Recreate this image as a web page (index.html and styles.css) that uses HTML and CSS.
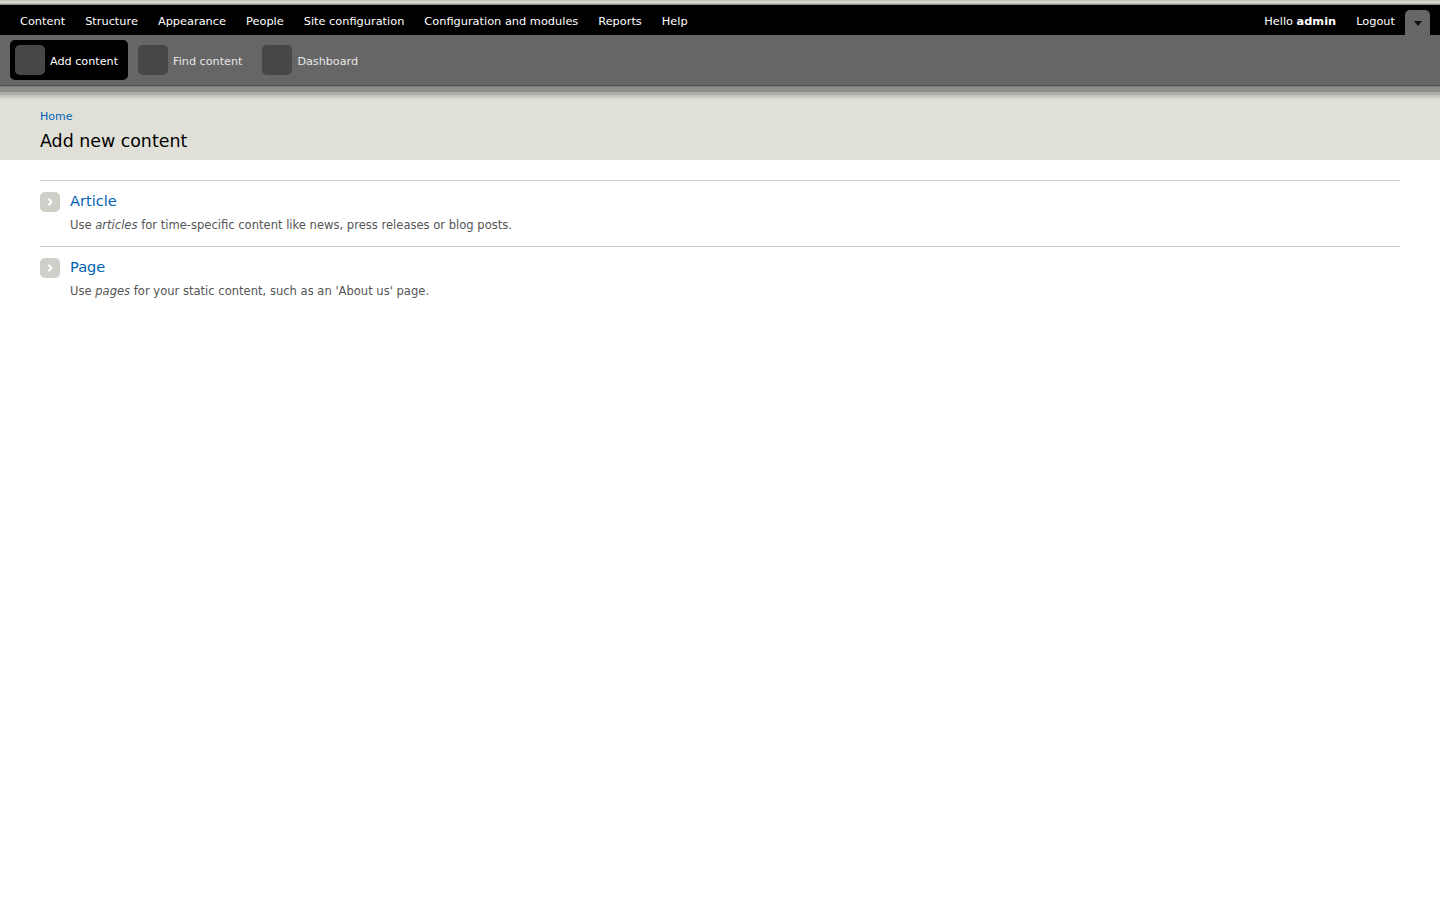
FILE: index.html
```html
<!DOCTYPE html>
<html lang="en">
<head>
<meta charset="utf-8">
<title>Add new content</title>
<link rel="stylesheet" href="styles.css">
</head>
<body>
<div class="toolbar">
  <div class="top-strip"></div>
  <nav class="menu-bar">
    <ul class="menu">
      <li><a href="#">Content</a></li>
      <li><a href="#">Structure</a></li>
      <li><a href="#">Appearance</a></li>
      <li><a href="#">People</a></li>
      <li><a href="#">Site configuration</a></li>
      <li><a href="#">Configuration and modules</a></li>
      <li><a href="#">Reports</a></li>
      <li><a href="#">Help</a></li>
    </ul>
    <div class="user">
      <span>Hello <strong>admin</strong></span>
      <a href="#">Logout</a>
      <span class="toggle"><svg width="8" height="5" viewBox="0 0 8 5"><path d="M0 0h8L4 5z" fill="#111"/></svg></span>
    </div>
  </nav>
  <div class="shortcuts">
    <a class="shortcut active" href="#"><span class="sicon"></span><span class="slabel">Add content</span></a>
    <a class="shortcut" href="#"><span class="sicon"></span><span class="slabel">Find content</span></a>
    <a class="shortcut" href="#"><span class="sicon"></span><span class="slabel">Dashboard</span></a>
  </div>
  <div class="shadow"></div>
</div>
<header class="page-head">
  <a class="crumb" href="#">Home</a>
  <h1>Add new content</h1>
</header>
<main class="content">
  <div class="item">
    <div class="item-title">
      <span class="arrow"><svg width="6" height="8" viewBox="0 0 6 8"><path d="M1.5 .8 4.5 4 1.5 7.2" fill="none" stroke="#fff" stroke-width="2"/></svg></span>
      <a href="#">Article</a>
    </div>
    <p>Use <em>articles</em> for time-specific content like news, press releases or blog posts.</p>
  </div>
  <div class="item">
    <div class="item-title">
      <span class="arrow"><svg width="6" height="8" viewBox="0 0 6 8"><path d="M1.5 .8 4.5 4 1.5 7.2" fill="none" stroke="#fff" stroke-width="2"/></svg></span>
      <a href="#">Page</a>
    </div>
    <p>Use <em>pages</em> for your static content, such as an 'About us' page.</p>
  </div>
</main>
</body>
</html>
```
FILE: styles.css
```css
html, body { margin: 0; padding: 0; background: #fff; }
body { font-family: "DejaVu Sans", Verdana, sans-serif; font-size: 11.35px; color: #555; }
a { text-decoration: none; }
.top-strip { height: 5px; background: linear-gradient(#c4c4bc 0 1px, #d6d6d0 1px 3px, #c0c0b8 3px 4px, #8f8f8a 4px 5px); }
.menu-bar { height: 30px; background: #000; display: flex; justify-content: space-between; color: #fff; }
.menu { list-style: none; margin: 0; padding: 0 0 0 20px; display: flex; gap: 20px; }
.menu a, .user a { color: #fff; }
.menu li, .user { line-height: 33px; }
.user { display: flex; gap: 20px; padding-right: 10px; }
.user strong { font-weight: bold; }
.toggle { width: 25px; height: 25px; margin-top: 5px; background: #666; border-radius: 5px 5px 0 0; display: flex; align-items: center; justify-content: center; padding-top: 2px; box-sizing: border-box; margin-left: -10px; }
.shortcuts { height: 50px; background: #666; display: flex; align-items: center; padding-left: 10px; gap: 10px; box-sizing: border-box; font-size: 11.2px; }
.shortcut { color: #e6e6e6; display: flex; align-items: center; gap: 5px; height: 40px; padding: 0 10px 0 0; border-radius: 5px; }
.shortcut.active { background: #000; color: #fff; padding-left: 5px; }
.slabel { margin-top: 2px; }
.sicon { width: 30px; height: 30px; background: #474745; border-radius: 5px; }
.shadow { height: 14px; background: linear-gradient(#4f4f4f 0 1px, #7c7c78 1px 2px, #8f8f8b 2px 7px, #adada6 7px 10px, #c6c6bf 10px 12px, #d4d4cd 12px 14px); }
.page-head { height: 61px; background: #e0e0d8; padding: 11px 40px 0; box-sizing: border-box; }
.crumb { display: block; color: #0062b4; font-size: 11px; line-height: 14px; }
h1 { margin: 5px 0 0; font-size: 17.4px; font-weight: normal; line-height: 24px; color: #000; }
.content { padding: 20px 40px 0; }
.item { border-top: 1px solid #ccc; height: 66px; box-sizing: border-box; padding-top: 11px; }
.item-title { display: flex; align-items: center; gap: 10px; height: 20px; }
.item-title a { color: #0062b4; font-size: 14.6px; line-height: 16px; margin-top: -2px; }
.arrow { width: 20px; height: 20px; background: #cfcfc9; border-radius: 5px; display: flex; align-items: center; justify-content: center; }
.item p { margin: 5px 0 0 30px; font-size: 11.55px; line-height: 16px; color: #555; }
```
